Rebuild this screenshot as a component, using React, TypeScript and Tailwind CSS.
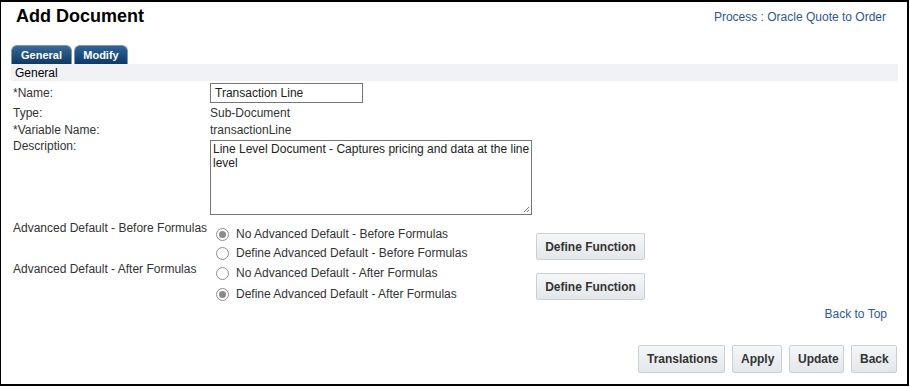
import React from "react";

const Radio = ({ checked }: { checked?: boolean }) => (
  <span className="inline-flex h-[13px] w-[13px] shrink-0 items-center justify-center rounded-full border border-[#8f8f8f] bg-white">
    {checked && <span className="h-[7px] w-[7px] rounded-full bg-[#8a8a8a]" />}
  </span>
);

const Btn = ({ children, className = "" }: { children: React.ReactNode; className?: string }) => (
  <button
    className={`rounded-[2px] border border-[#c9d0d6] bg-gradient-to-b from-[#f5f7f8] to-[#e3e7ea] px-[8px] text-[12px] font-bold text-[#333] ${className}`}
  >
    {children}
  </button>
);

export default function App() {
  return (
    <div className="h-[387px] w-[910px] bg-white" style={{ fontFamily: '"Liberation Sans", Arial, sans-serif' }}>
      <div className="flex h-[386px] w-[909px] flex-col border-2 border-l border-black pl-[10px] pr-[9px]">
        <div className="flex items-start justify-between">
          <h1 className="pl-[5px] pt-[3px] text-[18px] font-bold leading-[22px] text-black">Add Document</h1>
          <a className="mr-[12px] mt-[8px] text-[12px] leading-[14px] text-[#2b5797]">Process : Oracle Quote to Order</a>
        </div>
        <div className="mt-[18px] flex gap-[2px]">
          <div className="flex h-[19px] w-[61px] items-center justify-center rounded-t-[6px] border border-b-0 border-[#7d98b3] bg-gradient-to-b from-[#3a6a96] to-[#0d3966] text-[11px] font-bold text-white">
            General
          </div>
          <div className="flex h-[19px] w-[54px] items-center justify-center rounded-t-[6px] border border-b-0 border-[#7d98b3] bg-gradient-to-b from-[#2f6494] to-[#0a3a6b] text-[11px] font-bold text-white">
            Modify
          </div>
        </div>
        <div className="flex h-[17px] w-[887px] items-center bg-[#f1f2f6] pl-[4px] text-[12px] text-black">
          General
        </div>
        <div className="grid grid-cols-[197px_1fr] pl-[2px] text-[12px] leading-[14px] text-[#333]">
          <div className="pt-[5px]">*Name:</div>
          <div className="pt-[2px]">
            <div className="flex h-[20px] w-[153px] items-center border border-[#767676] px-[4px] text-[12px] text-[#222]">
              Transaction Line
            </div>
          </div>
          <div className="pt-[3px]">Type:</div>
          <div className="pt-[3px]">Sub-Document</div>
          <div className="pt-[3px]">*Variable Name:</div>
          <div className="pt-[3px]">transactionLine</div>
          <div className="pt-[2px]">Description:</div>
          <div className="pt-[3px]">
            <div className="relative h-[75px] w-[322px] whitespace-nowrap border border-[#767676] pl-[2px] pt-[1px] text-[12px] leading-[14px] text-[#222]">
              Line Level Document - Captures pricing and data at the line
              <br />
              level
              <svg className="absolute bottom-[1px] right-[1px]" width="7" height="7" viewBox="0 0 7 7">
                <path d="M6 1L1 6M6 4L4 6" stroke="#777" strokeWidth="1" />
              </svg>
            </div>
          </div>

          <div className="pt-[6px]">Advanced Default - Before Formulas</div>
          <div className="flex items-start pt-[6px]">
            <div className="mt-[6px] flex w-[326px] flex-col gap-[5px] pl-[6px]">
              <div className="flex h-[14px] items-center gap-[7px]"><Radio checked /><span>No Advanced Default - Before Formulas</span></div>
              <div className="flex h-[14px] items-center gap-[7px]"><Radio /><span>Define Advanced Default - Before Formulas</span></div>
            </div>
            <Btn className="mt-[12px] h-[27px] w-[109px]">Define Function</Btn>
          </div>

          <div className="pt-[2px]">Advanced Default - After Formulas</div>
          <div className="flex items-start pt-[2px]">
            <div className="mt-[4px] flex w-[326px] flex-col gap-[7px] pl-[6px]">
              <div className="flex h-[14px] items-center gap-[7px]"><Radio /><span>No Advanced Default - After Formulas</span></div>
              <div className="flex h-[14px] items-center gap-[7px]"><Radio checked /><span>Define Advanced Default - After Formulas</span></div>
            </div>
            <Btn className="mt-[11px] h-[27px] w-[109px]">Define Function</Btn>
          </div>
        </div>
        <div className="mt-[6px] flex justify-end pr-[11px]">
          <a className="text-[12px] leading-[14px] text-[#2b5797]">Back to Top</a>
        </div>
        <div className="mt-[24px] flex justify-end gap-[7px] pr-[1px]">
          <Btn className="h-[28px] w-[87px]">Translations</Btn>
          <Btn className="h-[28px] w-[50px]">Apply</Btn>
          <Btn className="h-[28px] w-[55px]">Update</Btn>
          <Btn className="h-[28px] w-[46px]">Back</Btn>
        </div>
      </div>
    </div>
  );
}
